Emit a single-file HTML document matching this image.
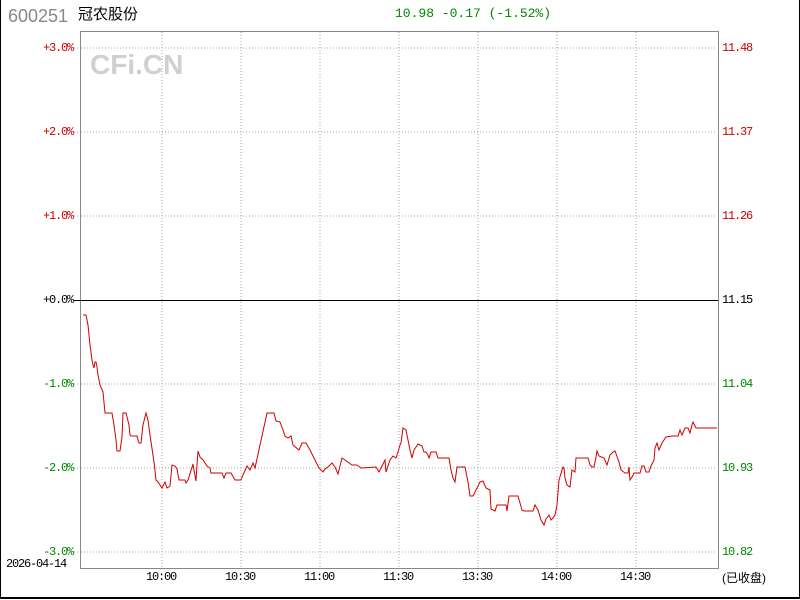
<!DOCTYPE html><html><head><style>
body{margin:0;width:800px;height:600px;background:#fff;overflow:hidden;position:relative;font-family:"Liberation Mono",monospace;}
.t{position:absolute;white-space:nowrap;font-size:12px;line-height:12px;letter-spacing:-1.2px}
.l{width:73px;text-align:right;left:0}
.r{left:722px}
.red{color:#d00000}.grn{color:#008800}
</style></head><body>
<div style="position:absolute;left:0;top:0;width:798px;height:597px;border-left:1px solid #000;border-bottom:2px solid #000;border-right:1px solid #000"></div>
<div class="t" style="left:8px;top:7px;font-family:'Liberation Sans',sans-serif;font-size:18px;line-height:18px;color:#888;letter-spacing:0">600251</div>
<div class="t" style="left:78px;top:6px;font-family:'Liberation Sans','Noto Sans CJK SC',sans-serif;font-size:15px;line-height:18px;color:#000;letter-spacing:0">冠农股份</div>
<div class="t grn" style="left:395px;top:8px;font-size:13px;letter-spacing:0">10.98 -0.17 (-1.52%)</div>
<svg style="position:absolute;left:0;top:0" width="800" height="600">
<g stroke="#aaa" stroke-dasharray="1,2" fill="none">
<path d="M81 48H717M81 132H717M81 216H717M81 384H717M81 468H717M81 552H717"/>
<path d="M162 32V568M241 32V568M320 32V568M399 32V568M478 32V568M557 32V568M636 32V568"/>
<path d="M74 48H80M74 132H80M74 216H80M74 384H80M74 468H80M74 552H80"/>
</g>
<rect x="80.5" y="31.5" width="638" height="537" fill="none" stroke="#888"/>
<path d="M80 300.5H718" stroke="#000"/>
<path d="M74 300.5H80" stroke="#000"/>
<polyline fill="none" stroke="#d00000" stroke-width="1" points="83,315 86,315 88,325 90,345 92,360 93,365 94,368 95,362 96,362 97,367 98,375 100,385 103,392 105,413 107,413 112,413 114,425 116,440 117,451 120,451 122,437 123,413 126,413 129,425 130,435 131,436 137,436 138,440 139,443 141,443 143,425 146,413 148,420 150,435 154,462 156,480 158,482 162,488 165,482 167,488 170,486 172,465 175,466 177,469 179,480 185,480 186,483 188,480 193,464 194,470 196,481 197,465 198,451 200,457 203,460 207,466 210,468 211,473 222,473 224,478 226,473 231,473 235,480 241,480 243,475 247,466 250,470 253,463 255,468 267,413 274,413 276,421 280,422 283,430 285,436 288,438 291,436 293,445 299,450 302,443 306,443 310,450 315,460 319,468 323,472 325,469 328,467 332,463 335,467 338,474 342,458 345,460 352,465 357,465 361,468 376,467 379,472 382,466 385,460 386,472 390,460 393,456 396,458 398,452 400,445 401,443 403,428 406,430 408,440 410,450 412,458 414,450 418,444 422,446 424,452 426,452 428,455 429,458 431,452 436,452 438,458 449,458 451,470 453,478 455,482 457,467 465,467 468,482 470,496 473,496 477,488 480,482 483,481 486,488 490,490 491,509 495,511 497,505 506,505 507,511 509,496 518,496 522,510 524,511 533,511 535,505 538,510 541,520 544,525 546,519 549,515 551,520 553,518 555,515 557,505 559,480 563,467 564,468 565,478 567,485 570,487 572,470 575,472 576,458 578,458 588,458 590,465 592,467 594,467 596,457 597,451 599,456 604,458 607,465 610,455 613,452 615,451 619,462 621,470 625,473 628,473 629,467 630,480 632,477 634,473 640,473 642,466 644,466 646,472 649,472 651,466 654,460 655,448 657,443 659,450 662,443 666,437 672,436 678,436 680,430 682,435 685,428 688,428 690,433 692,425 693,422 696,428 717,428"/>
</svg>
<div class="t" style="left:90px;top:51px;font-family:'Liberation Sans',sans-serif;font-weight:bold;font-size:28px;line-height:28px;color:#d0d0d0;letter-spacing:0">CFi.CN</div>
<div class="t l red" style="top:42px">+3.0%</div>
<div class="t l red" style="top:126px">+2.0%</div>
<div class="t l red" style="top:210px">+1.0%</div>
<div class="t l" style="top:294px">+0.0%</div>
<div class="t l grn" style="top:378px">-1.0%</div>
<div class="t l grn" style="top:462px">-2.0%</div>
<div class="t l grn" style="top:546px">-3.0%</div>
<div class="t" style="left:6px;top:558px">2026-04-14</div>
<div class="t r red" style="top:42px">11.48</div>
<div class="t r red" style="top:126px">11.37</div>
<div class="t r red" style="top:210px">11.26</div>
<div class="t r" style="top:294px">11.15</div>
<div class="t r grn" style="top:378px">11.04</div>
<div class="t r grn" style="top:462px">10.93</div>
<div class="t r grn" style="top:546px">10.82</div>
<div class="t" style="left:146px;top:571px">10:00</div>
<div class="t" style="left:225px;top:571px">10:30</div>
<div class="t" style="left:304px;top:571px">11:00</div>
<div class="t" style="left:383px;top:571px">11:30</div>
<div class="t" style="left:462px;top:571px">13:30</div>
<div class="t" style="left:541px;top:571px">14:00</div>
<div class="t" style="left:620px;top:571px">14:30</div>
<div class="t" style="left:722px;top:572px;font-family:'Liberation Sans','Noto Sans CJK SC',sans-serif;letter-spacing:0">(已收盘)</div>
</body></html>
